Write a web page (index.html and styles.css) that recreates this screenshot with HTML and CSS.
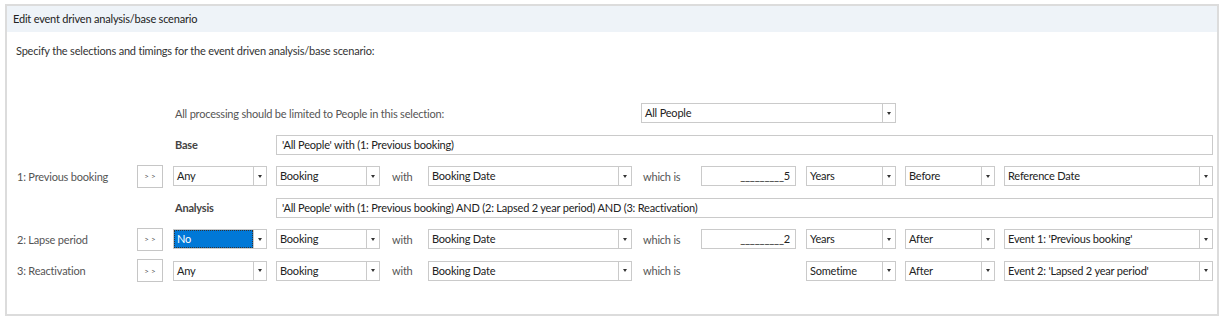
FILE: index.html
```html
<!DOCTYPE html>
<html lang="en">
<head>
  <meta charset="UTF-8">
  <meta name="viewport" content="width=device-width, initial-scale=1.0">
  <title>Edit event driven analysis/base scenario</title>
  <link rel="stylesheet" href="styles.css">
</head>
<body>
  <div class="panel">
    <div class="panel-header">Edit event driven analysis/base scenario</div>
    <div class="panel-body">
      <p class="intro">Specify the selections and timings for the event driven analysis/base scenario:</p>

      <div class="scenario">
        <div class="limit-label">All processing should be limited to People in this selection:</div>
        <div class="select people"><span class="select-value">All People</span><span class="select-arrow"></span></div>

        <div class="section-label">Base</div>
        <div class="textbox summary">'All People' with (1: Previous booking)</div>

        <!-- event 1 -->
        <div class="event-name">1: Previous booking</div>
        <button class="expand-btn">&gt; &gt;</button>
        <div class="select occurrence"><span class="select-value">Any</span><span class="select-arrow"></span></div>
        <div class="select event-type"><span class="select-value">Booking</span><span class="select-arrow"></span></div>
        <div class="word with">with</div>
        <div class="select date-field"><span class="select-value">Booking Date</span><span class="select-arrow"></span></div>
        <div class="word which">which is</div>
        <div class="textbox offset">_________5</div>
        <div class="select unit"><span class="select-value">Years</span><span class="select-arrow"></span></div>
        <div class="select direction"><span class="select-value">Before</span><span class="select-arrow"></span></div>
        <div class="select anchor"><span class="select-value">Reference Date</span><span class="select-arrow"></span></div>

        <div class="section-label">Analysis</div>
        <div class="textbox summary">'All People' with (1: Previous booking) AND (2: Lapsed 2 year period) AND (3: Reactivation)</div>

        <!-- event 2 -->
        <div class="event-name">2: Lapse period</div>
        <button class="expand-btn">&gt; &gt;</button>
        <div class="select occurrence focused"><span class="select-value">No</span><span class="select-arrow"></span></div>
        <div class="select event-type"><span class="select-value">Booking</span><span class="select-arrow"></span></div>
        <div class="word with">with</div>
        <div class="select date-field"><span class="select-value">Booking Date</span><span class="select-arrow"></span></div>
        <div class="word which">which is</div>
        <div class="textbox offset">_________2</div>
        <div class="select unit"><span class="select-value">Years</span><span class="select-arrow"></span></div>
        <div class="select direction"><span class="select-value">After</span><span class="select-arrow"></span></div>
        <div class="select anchor"><span class="select-value">Event 1: 'Previous booking'</span><span class="select-arrow"></span></div>

        <!-- event 3 -->
        <div class="event-name">3: Reactivation</div>
        <button class="expand-btn">&gt; &gt;</button>
        <div class="select occurrence"><span class="select-value">Any</span><span class="select-arrow"></span></div>
        <div class="select event-type"><span class="select-value">Booking</span><span class="select-arrow"></span></div>
        <div class="word with">with</div>
        <div class="select date-field"><span class="select-value">Booking Date</span><span class="select-arrow"></span></div>
        <div class="word which">which is</div>
        <div class="select unit"><span class="select-value">Sometime</span><span class="select-arrow"></span></div>
        <div class="select direction"><span class="select-value">After</span><span class="select-arrow"></span></div>
        <div class="select anchor"><span class="select-value">Event 2: 'Lapsed 2 year period'</span><span class="select-arrow"></span></div>
      </div>
    </div>
  </div>
</body>
</html>
```

FILE: styles.css
```css
body {
  margin: 0;
  padding: 0;
  background: #fff;
  font-family: 'Lato', 'Open Sans', sans-serif;
  font-size: 11px;
  letter-spacing: -0.2px;
  color: #333;
}
.panel {
  margin: 4px 0 0 5px;
  width: 1214px;
  height: 312px;
  box-sizing: border-box;
  border: 2px solid #dcdcdc;
}
.panel-header {
  height: 26px;
  line-height: 26px;
  padding-left: 6px;
  background-color: #eef3f8;
  color: #222;
}
.panel-body {
  padding: 11px 0 0 9px;
}
.intro {
  margin: 0;
  line-height: 16px;
  color: #333;
}
/* rejilla de eventos */
.scenario {
  display: grid;
  grid-template-columns: 120px 36px 103px 104px 48px 204px 69px 105px 99px 99px 209px;
  grid-auto-rows: 20px;
  row-gap: 11.6px;
  align-items: center;
  margin: 44px 0 0 1px;
}
.limit-label {
  grid-column: 3 / 7;
  padding-left: 2px;
  color: #555;
}
.select.people {
  grid-column: 7 / 10;
  margin-left: 9px;
  width: 255px;
}
.section-label {
  grid-column: 3;
  padding-left: 2px;
  font-weight: bold;
  color: #444;
}
.summary {
  grid-column: 4 / 12;
}
.event-name {
  grid-column: 1;
  color: #555;
}
.expand-btn {
  grid-column: 2;
  width: 26px;
  height: 23px;
  padding: 0;
  border: 1px solid #c6c6c6;
  background: #fff;
  font-family: inherit;
  font-size: 8px;
  color: #555;
}
.occurrence { grid-column: 3; width: 94px; }
.event-type { grid-column: 4; width: 104px; }
.with { grid-column: 5; padding-left: 12px; }
.date-field { grid-column: 6; width: 204px; }
.which { grid-column: 7; padding-left: 11px; }
.offset { grid-column: 8; width: 95px; text-align: right; padding-right: 4px; }
.unit { grid-column: 9; width: 90px; }
.direction { grid-column: 10; width: 90px; }
.anchor { grid-column: 11; width: 209px; }
.word {
  color: #555;
}
.select {
  display: flex;
  height: 20px;
  box-sizing: border-box;
  border: 1px solid #cacaca;
  background: #fff;
  color: #222;
}
.select-value {
  flex: 1;
  padding-left: 3px;
  line-height: 18px;
  white-space: nowrap;
  overflow: hidden;
}
.select-arrow {
  width: 12px;
  border-left: 1px solid #cacaca;
  display: flex;
  align-items: center;
  justify-content: center;
}
.select-arrow::after {
  content: '';
  border-left: 2.5px solid transparent;
  border-right: 2.5px solid transparent;
  border-top: 3px solid #333;
}
.select.focused .select-value {
  background-color: #0078d7;
  color: #fff;
  outline: 1px dotted #333;
  outline-offset: -1px;
}
.textbox {
  height: 20px;
  box-sizing: border-box;
  border: 1px solid #cacaca;
  padding: 0 5px;
  line-height: 18px;
  color: #222;
  white-space: nowrap;
  overflow: hidden;
}
```
